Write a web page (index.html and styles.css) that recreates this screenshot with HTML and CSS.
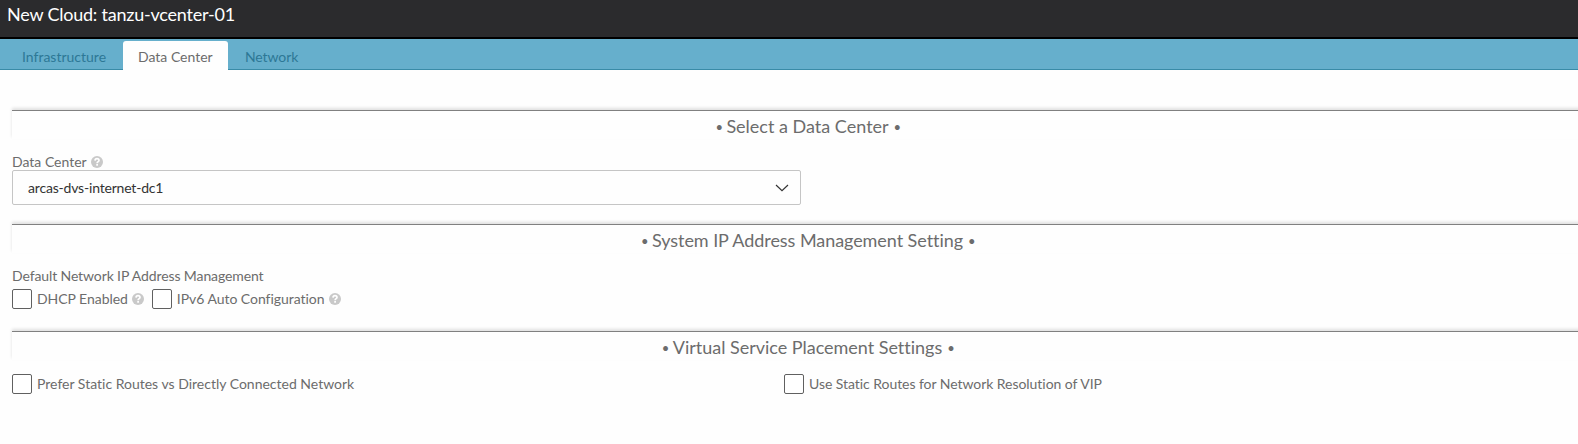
FILE: index.html
```html
<!DOCTYPE html>
<html lang="en">
<head>
<meta charset="utf-8">
<title>New Cloud</title>
<link rel="stylesheet" href="styles.css">
</head>
<body>
<svg class="defs" width="0" height="0" aria-hidden="true">
  <symbol id="help" viewBox="0 0 12 12">
    <circle cx="6" cy="6" r="6" fill="#c9c9c9"/>
    <path d="M4 4.600C4.100 3.300 4.900 2.700 6 2.700c1.200 0 2 .7 2 1.700C8 5.700 6.100 5.600 6.100 7.200M6.100 8.100v1.600" fill="none" stroke="#fff" stroke-width="1.700"/>
  </symbol>
</svg>
<header class="header"><h1 class="title">New Cloud: tanzu-vcenter-01</h1></header>
<nav class="tabs">
  <a class="tab tab-infra">Infrastructure</a>
  <a class="tab tab-active">Data Center</a>
  <a class="tab tab-network">Network</a>
</nav>
<main class="content">
  <h2 class="section"><span class="dot">•</span><span class="h-select">Select a Data Center</span><span class="dot">•</span></h2>
  <div class="field">
    <div class="label"><span class="t-dc">Data Center</span><svg class="help"><use href="#help"/></svg></div>
    <div class="select"><span class="t-value">arcas-dvs-internet-dc1</span>
      <svg class="chevron" viewBox="0 0 14 8"><path d="M1 1l6 5.700L13 1" fill="none" stroke="#333" stroke-width="1.200"/></svg>
    </div>
  </div>
  <h2 class="section"><span class="dot">•</span><span class="h-system">System IP Address Management Setting</span><span class="dot">•</span></h2>
  <div class="ipam">
    <div class="label"><span class="t-default">Default Network IP Address Management</span></div>
    <div class="checks">
      <span class="box"></span><span class="t-dhcp">DHCP Enabled</span><svg class="help"><use href="#help"/></svg>
      <span class="box box-next"></span><span class="t-ipv6">IPv6 Auto Configuration</span><svg class="help"><use href="#help"/></svg>
    </div>
  </div>
  <h2 class="section"><span class="dot">•</span><span class="h-virtual">Virtual Service Placement Settings</span><span class="dot">•</span></h2>
  <div class="placement">
    <div class="checks"><span class="box"></span><span class="t-prefer">Prefer Static Routes vs Directly Connected Network</span></div>
    <div class="checks"><span class="box"></span><span class="t-use">Use Static Routes for Network Resolution of VIP</span></div>
  </div>
</main>
</body>
</html>
```
FILE: styles.css
```css
* { box-sizing: border-box; }
body { margin: 0; height: 444px; overflow: hidden; background: #fefefe; color: #6c6c6c; font: 14px/20px Lato, sans-serif; font-variant-ligatures: none; }
.defs { position: absolute; }
.header { height: 39px; padding: 2px 7px; background: #2b2b2d; border-bottom: 2px solid #000; }
.title { margin: 0; font-size: 18px; line-height: 24px; font-weight: 400; letter-spacing: -.22px; color: #fff; }
.tabs { display: flex; height: 31px; padding-top: 2px; background: linear-gradient(#66afcc 30px, #398ba7 30px); }
.tab { height: 29px; line-height: 32px; color: #2d7896; white-space: nowrap; }
.tab-infra { width: 123px; padding-left: 22px; }
.tab-active { width: 105px; padding-left: 15px; background: #fefefe; border-radius: 3px 3px 0 0; color: #6c6c6c; }
.tab-network { padding-left: 17px; letter-spacing: -.1px; }
.content { width: 1604px; padding: 40px 0 0 12px; }
.section { display: flex; justify-content: center; gap: 5px; height: 29px; margin: 0; padding-right: 1px; border-top: 1px solid #808080; box-shadow: 0 -2px 3px rgba(0,0,0,.12); background: #fefefe; font-size: 18px; line-height: 31px; font-weight: 400; white-space: nowrap; }
.dot { width: 6px; font-size: 13px; line-height: 32px; }
.h-system { letter-spacing: -.06px; }
.h-virtual { letter-spacing: -.02px; }
.field { height: 85px; padding-top: 13px; }
.label { display: flex; align-items: center; height: 18px; white-space: nowrap; }
.field .label { padding-top: 1px; }
.help { width: 12px; height: 12px; margin-left: 4px; flex: none; }
.select { display: flex; align-items: center; justify-content: space-between; width: 789px; height: 35px; padding: 0 11px 0 15px; border: 1px solid #c5c5c5; border-radius: 2px; color: #333; }
.chevron { width: 14px; height: 8px; }
.t-value { letter-spacing: -.19px; }
.ipam { height: 78px; padding-top: 14px; }
.checks { display: flex; align-items: center; height: 20px; white-space: nowrap; }
.ipam .checks { margin-top: 4px; }
.t-default { letter-spacing: -.11px; }
.t-dhcp { letter-spacing: -.04px; }
.t-ipv6 { letter-spacing: -.04px; }
.t-use { letter-spacing: -.05px; }
.box { flex: none; width: 20px; height: 20px; margin-right: 5px; border: 1px solid #606060; border-radius: 2px; background: #fff; }
.box-next { margin-left: 8px; }
.placement { display: grid; grid-template-columns: 772px auto; padding-top: 14px; }
```
